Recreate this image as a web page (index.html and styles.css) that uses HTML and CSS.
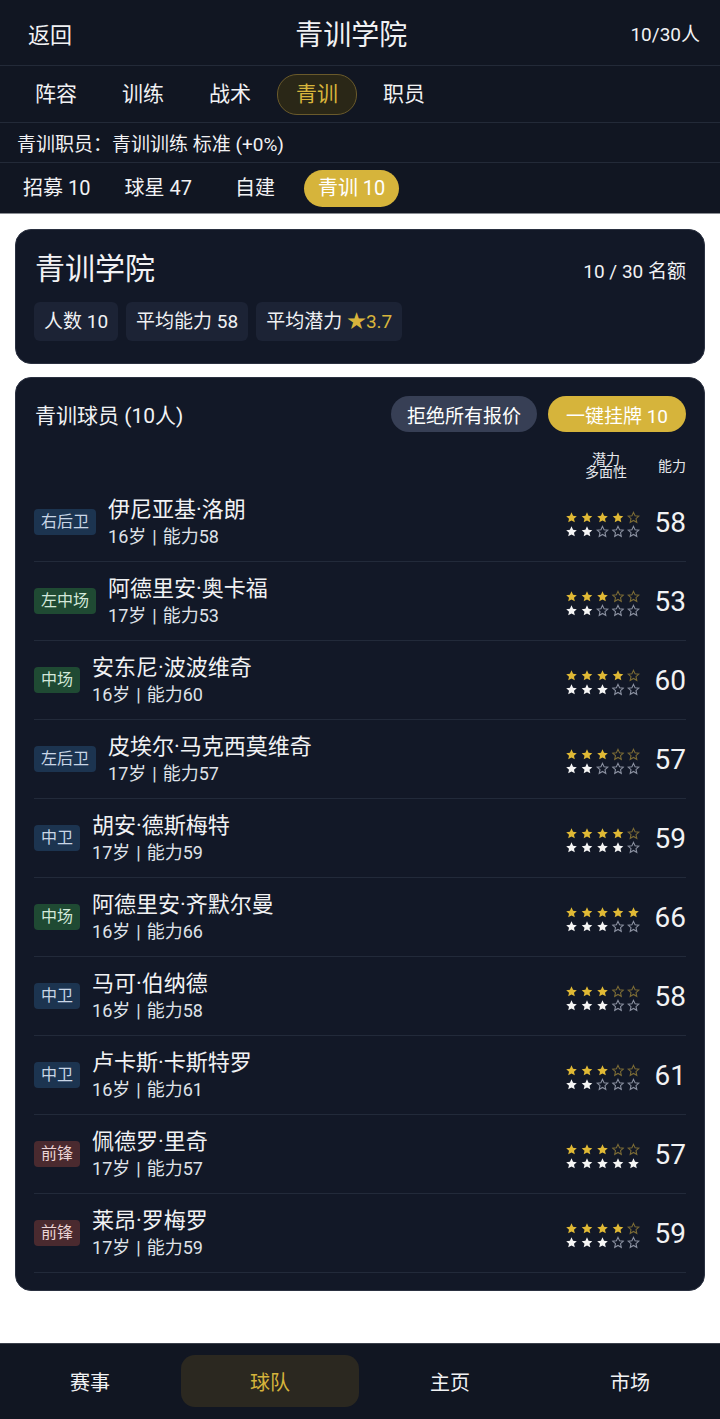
FILE: index.html
```html
<!DOCTYPE html>
<html lang="zh-CN">
<head>
    <meta charset="UTF-8">
    <meta name="viewport" content="width=device-width, initial-scale=1.0">
    <title>青训学院</title>
    <link rel="stylesheet" href="styles.css">
</head>
<body>
    <div class="top">
        <header class="header">
            <span class="back">返回</span>
            <h1>青训学院</h1>
            <span class="count">10/30人</span>
        </header>

        <nav class="tabs">
            <span class="tab">阵容</span>
            <span class="tab">训练</span>
            <span class="tab">战术</span>
            <span class="tab active">青训</span>
            <span class="tab">职员</span>
        </nav>

        <div class="staff">青训职员：青训训练 标准 (+0%)</div>

        <nav class="subtabs">
            <span class="subtab">招募 10</span>
            <span class="subtab">球星 47</span>
            <span class="subtab">自建</span>
            <span class="subtab active">青训 10</span>
        </nav>
    </div>

    <main class="main">
        <section class="card summary">
            <div class="summary-head">
                <h2>青训学院</h2>
                <span class="quota">10 / 30 名额</span>
            </div>
            <div class="chips">
                <span class="chip">人数 10</span>
                <span class="chip">平均能力 58</span>
                <span class="chip">平均潜力 <em>★3.7</em></span>
            </div>
        </section>

        <section class="card players">
            <div class="players-head">
                <h3>青训球员 (10人)</h3>
                <div class="actions">
                    <button class="btn btn-grey">拒绝所有报价</button>
                    <button class="btn btn-gold">一键挂牌 10</button>
                </div>
            </div>

            <div class="col-head">
                <span class="col-pot">潜力<br>多面性</span>
                <span class="col-ab">能力</span>
            </div>

            <ul class="list">
                <li class="row">
                    <span class="pos def">右后卫</span>
                    <div class="info"><div class="name">伊尼亚基·洛朗</div><div class="meta">16岁<b>|</b>能力58</div></div>
                    <div class="stars" data-pot="4" data-ver="2"></div>
                    <span class="ab">58</span>
                </li>
                <li class="row">
                    <span class="pos mid">左中场</span>
                    <div class="info"><div class="name">阿德里安·奥卡福</div><div class="meta">17岁<b>|</b>能力53</div></div>
                    <div class="stars" data-pot="3" data-ver="2"></div>
                    <span class="ab">53</span>
                </li>
                <li class="row">
                    <span class="pos mid">中场</span>
                    <div class="info"><div class="name">安东尼·波波维奇</div><div class="meta">16岁<b>|</b>能力60</div></div>
                    <div class="stars" data-pot="4" data-ver="3"></div>
                    <span class="ab">60</span>
                </li>
                <li class="row">
                    <span class="pos def">左后卫</span>
                    <div class="info"><div class="name">皮埃尔·马克西莫维奇</div><div class="meta">17岁<b>|</b>能力57</div></div>
                    <div class="stars" data-pot="3" data-ver="2"></div>
                    <span class="ab">57</span>
                </li>
                <li class="row">
                    <span class="pos def">中卫</span>
                    <div class="info"><div class="name">胡安·德斯梅特</div><div class="meta">17岁<b>|</b>能力59</div></div>
                    <div class="stars" data-pot="4" data-ver="4"></div>
                    <span class="ab">59</span>
                </li>
                <li class="row">
                    <span class="pos mid">中场</span>
                    <div class="info"><div class="name">阿德里安·齐默尔曼</div><div class="meta">16岁<b>|</b>能力66</div></div>
                    <div class="stars" data-pot="5" data-ver="3"></div>
                    <span class="ab">66</span>
                </li>
                <li class="row">
                    <span class="pos def">中卫</span>
                    <div class="info"><div class="name">马可·伯纳德</div><div class="meta">16岁<b>|</b>能力58</div></div>
                    <div class="stars" data-pot="3" data-ver="3"></div>
                    <span class="ab">58</span>
                </li>
                <li class="row">
                    <span class="pos def">中卫</span>
                    <div class="info"><div class="name">卢卡斯·卡斯特罗</div><div class="meta">16岁<b>|</b>能力61</div></div>
                    <div class="stars" data-pot="3" data-ver="2"></div>
                    <span class="ab">61</span>
                </li>
                <li class="row">
                    <span class="pos fwd">前锋</span>
                    <div class="info"><div class="name">佩德罗·里奇</div><div class="meta">17岁<b>|</b>能力57</div></div>
                    <div class="stars" data-pot="3" data-ver="5"></div>
                    <span class="ab">57</span>
                </li>
                <li class="row">
                    <span class="pos fwd">前锋</span>
                    <div class="info"><div class="name">莱昂·罗梅罗</div><div class="meta">17岁<b>|</b>能力59</div></div>
                    <div class="stars" data-pot="4" data-ver="3"></div>
                    <span class="ab">59</span>
                </li>
            </ul>
        </section>
    </main>

    <nav class="bottom-nav">
        <span class="nav-item">赛事</span>
        <span class="nav-item active">球队</span>
        <span class="nav-item">主页</span>
        <span class="nav-item">市场</span>
    </nav>

    <svg width="0" height="0" style="position:absolute">
        <symbol id="star" viewBox="0 0 24 24">
            <path d="M12 2.5l2.9 6.3 6.9.7-5.2 4.6 1.5 6.8L12 17.4l-6.1 3.5 1.5-6.8-5.2-4.6 6.9-.7z"/>
        </symbol>
    </svg>

    <script>
        // two star lines per player: potential (gold) and versatility (white)
        function starLine(n, cls) {
            let html = '<svg class="line ' + cls + '" width="76" height="13" viewBox="0 0 76 13">';
            for (let i = 0; i < 5; i++) {
                let x = i * 15.5;
                html += '<use href="#star" x="' + x + '" y="0" width="13" height="13" class="' + (i < n ? 'on' : 'off') + '"/>';
            }
            return html + '</svg>';
        }

        document.querySelectorAll('.stars').forEach(function (el) {
            el.innerHTML = starLine(+el.dataset.pot, 'gold') + starLine(+el.dataset.ver, 'white');
        });
    </script>
</body>
</html>
```

FILE: styles.css
```css
* {
    box-sizing: border-box;
}
body {
    margin: 0;
    height: 100vh;
    display: flex;
    flex-direction: column;
    background: #ffffff;
    color: #f1f2f4;
    font-family: Roboto, "Noto Sans CJK SC", sans-serif;
}
h1, h2, h3 {
    margin: 0;
    font-weight: 400;
}

/* top bar */
.top {
    background: #111622;
}
.header {
    height: 66px;
    padding: 0 20px 0 28px;
    display: flex;
    align-items: center;
    justify-content: space-between;
    border-bottom: 1px solid #232a38;
}
.back {
    font-size: 22px;
}
.header h1 {
    font-size: 28px;
}
.count {
    font-size: 19px;
}
.tabs {
    height: 57px;
    padding: 0 16px;
    display: flex;
    align-items: center;
    gap: 7px;
    border-bottom: 1px solid #232a38;
}
.tab {
    font-size: 21px;
    line-height: 39px;
    padding: 0 18px;
    border: 1px solid transparent;
    border-radius: 20px;
}
.tab.active {
    color: #d8b53c;
    background: #2a2717;
    border-color: #6a5a2b;
}
.staff {
    height: 40px;
    padding: 0 17px;
    display: flex;
    align-items: center;
    font-size: 19px;
    border-bottom: 1px solid #232a38;
}
.subtabs {
    height: 51px;
    padding: 0 9px;
    display: flex;
    align-items: center;
    gap: 6px;
    border-bottom: 1px solid #8a8d93;
}
.subtab {
    font-size: 20px;
    line-height: 37px;
    padding: 0 14px;
    min-width: 86px;
    text-align: center;
    border-radius: 19px;
}
.subtab.active {
    background: #d6b43b;
    color: #fff;
}

/* content */
.main {
    flex: 1;
    padding: 15px 15px 0;
}
.card {
    background: #121827;
    border-radius: 16px;
    border: 1px solid #2a3040;
}
.summary {
    padding: 18px 18px 22px;
}
.summary-head {
    display: flex;
    align-items: center;
    justify-content: space-between;
}
.summary-head h2 {
    font-size: 30px;
    line-height: 42px;
    margin-left: 1px;
}
.quota {
    font-size: 19px;
}
.chips {
    margin-top: 12px;
    display: flex;
    gap: 8px;
}
.chip {
    background: #1c2335;
    border-radius: 6px;
    padding: 0 10px;
    line-height: 39px;
    font-size: 19px;
}
.chip em {
    font-style: normal;
    color: #d8b53c;
}

.players {
    margin-top: 13px;
    padding: 18px 18px 17px;
}
.players-head {
    display: flex;
    align-items: center;
    justify-content: space-between;
}
.players-head h3 {
    font-size: 21px;
    margin-left: 1px;
}
.actions {
    display: flex;
    gap: 11px;
}
.btn {
    font-family: inherit;
    font-size: 19px;
    height: 36px;
    border: none;
    border-radius: 18px;
    color: #fff;
    padding: 0 16px;
}
.btn-grey {
    background: #373f55;
}
.btn-gold {
    background: #d6b43b;
    padding: 0 18px;
}
.col-head {
    margin-top: 17px;
    height: 34px;
    display: flex;
    align-items: center;
    justify-content: flex-end;
    gap: 31px;
    font-size: 14px;
    color: #e6e8ec;
}
.col-pot {
    text-align: center;
    line-height: 13px;
}
.col-ab {
    line-height: 16px;
}
.list {
    list-style: none;
    margin: 0;
    padding: 0;
}
.row {
    height: 79px;
    display: flex;
    align-items: center;
    border-bottom: 1px solid #222a3a;
}
.pos {
    font-size: 16px;
    line-height: 26px;
    padding: 0 7px;
    border-radius: 4px;
    margin-right: 12px;
}
.pos.def {
    background: #1c3450;
    color: #c9d6e6;
}
.pos.mid {
    background: #1f4a33;
    color: #d3e8da;
}
.pos.fwd {
    background: #4a2a2f;
    color: #ead4d6;
}
.info {
    flex: 1;
}
.name {
    font-size: 22px;
    line-height: 29px;
}
.meta {
    font-size: 18px;
    line-height: 26px;
    color: #dfe2e8;
}
.meta b {
    font-weight: 400;
    margin: 0 6px;
}
.stars {
    display: flex;
    flex-direction: column;
    gap: 1px;
    margin-right: 14px;
    margin-top: 4px;
}
.stars .line {
    display: block;
}
.gold .on {
    fill: #e0b935;
}
.gold .off {
    fill: none;
    stroke: #7a6a35;
    stroke-width: 2;
}
.white .on {
    fill: #f5f5f5;
}
.white .off {
    fill: none;
    stroke: #8a90a0;
    stroke-width: 2;
}
.ab {
    font-size: 28px;
}

/* bottom nav */
.bottom-nav {
    height: 76px;
    background: #111622;
    border-top: 1px solid #3b404b;
    display: grid;
    grid-template-columns: repeat(4, 1fr);
    padding: 11px 0 12px;
}
.nav-item {
    display: flex;
    align-items: center;
    justify-content: center;
    font-size: 20px;
    border-radius: 14px;
}
.nav-item.active {
    background: #2b2820;
    color: #d6b43b;
    margin: 0 1px;
}
```
